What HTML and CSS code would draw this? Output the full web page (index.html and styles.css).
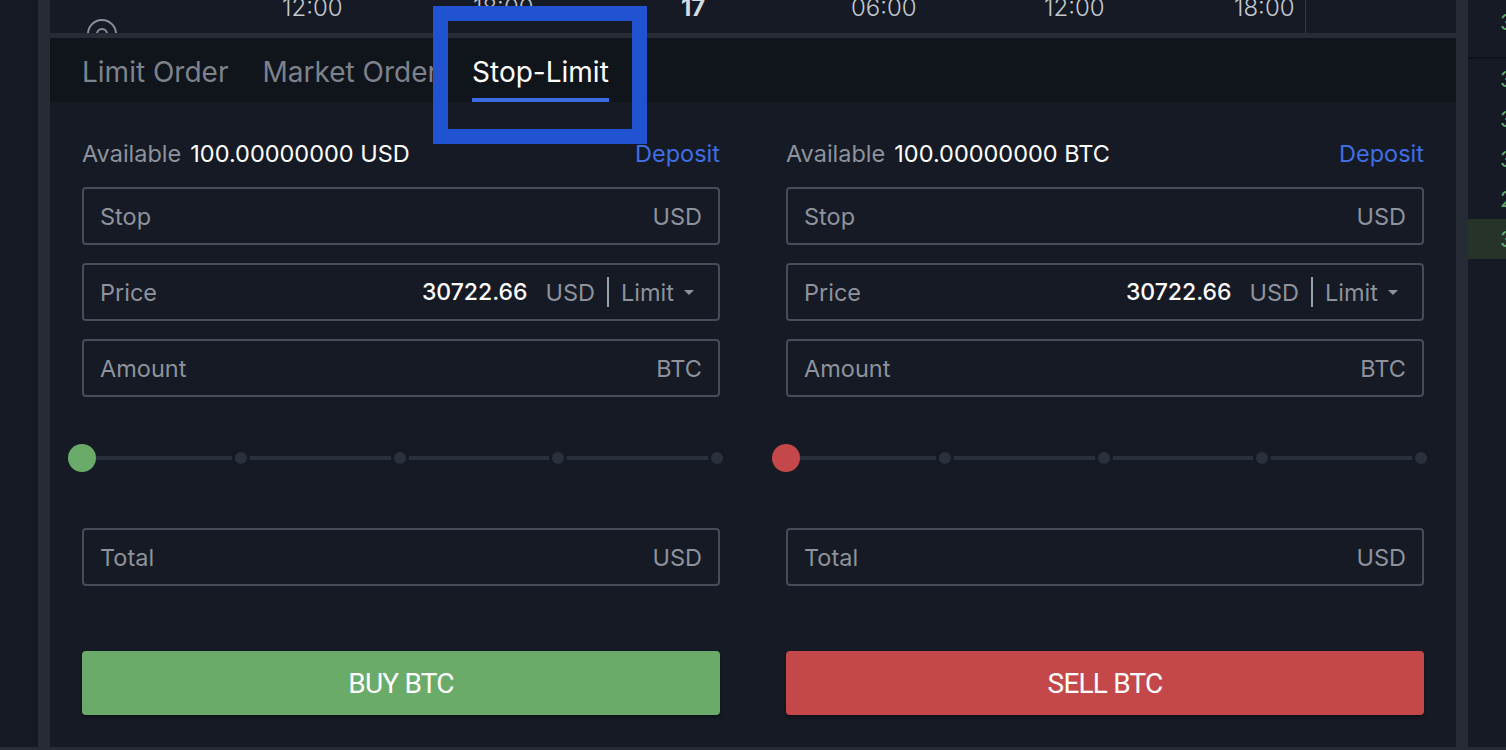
FILE: index.html
```html
<!DOCTYPE html>
<html lang="en">
<head>
    <meta name="viewport" content="width=device-width, initial-scale=1.0">
    <link rel="stylesheet" href="styles.css">
    <title>exchange - stop-limit</title>
</head>

<body>
    <div id="page">
        <div class="edge"></div>
        <div class="gutter"></div>

        <main id="panel">
            <!-- bottom of the price chart: time axis -->
            <div class="axis">
                <svg class="axis-icon" width="34" height="34" viewBox="0 0 34 34">
                    <circle cx="17" cy="17" r="14" fill="none" stroke="#8a909b" stroke-width="2"/>
                    <circle cx="17" cy="17" r="5" fill="none" stroke="#8a909b" stroke-width="2"/>
                </svg>
                <span class="tick" style="left: 232px">12:00</span>
                <span class="tick" style="left: 423px">18:00</span>
                <span class="tick day" style="left: 631px">17</span>
                <span class="tick" style="left: 801px">06:00</span>
                <span class="tick" style="left: 994px">12:00</span>
                <span class="tick" style="left: 1184px">18:00</span>
                <div class="axis-end"></div>
            </div>
            <div class="divider"></div>

            <nav class="tabs">
                <div class="tab">Limit Order</div>
                <div class="tab">Market Order</div>
                <div class="tab active">Stop-Limit</div>
            </nav>

            <section class="form">
                <div class="col">
                    <div class="available">
                        <span class="muted">Available</span>
                        <span class="balance">100.00000000 USD</span>
                        <a class="deposit">Deposit</a>
                    </div>
                    <div class="field"><span class="label">Stop</span><span class="unit">USD</span></div>
                    <div class="field price">
                        <span class="label">Price</span>
                        <span class="value">30722.66</span>
                        <span class="unit">USD</span>
                        <span class="sep"></span>
                        <span class="type">Limit</span>
                        <span class="caret"></span>
                    </div>
                    <div class="field"><span class="label">Amount</span><span class="unit">BTC</span></div>
                    <div class="slider">
                        <span class="stop knob buy"></span>
                        <span class="stop"></span>
                        <span class="stop"></span>
                        <span class="stop"></span>
                        <span class="stop"></span>
                    </div>
                    <div class="field"><span class="label">Total</span><span class="unit">USD</span></div>
                    <button class="action buy">BUY BTC</button>
                </div>

                <div class="col">
                    <div class="available">
                        <span class="muted">Available</span>
                        <span class="balance">100.00000000 BTC</span>
                        <a class="deposit">Deposit</a>
                    </div>
                    <div class="field"><span class="label">Stop</span><span class="unit">USD</span></div>
                    <div class="field price">
                        <span class="label">Price</span>
                        <span class="value">30722.66</span>
                        <span class="unit">USD</span>
                        <span class="sep"></span>
                        <span class="type">Limit</span>
                        <span class="caret"></span>
                    </div>
                    <div class="field"><span class="label">Amount</span><span class="unit">BTC</span></div>
                    <div class="slider">
                        <span class="stop knob sell"></span>
                        <span class="stop"></span>
                        <span class="stop"></span>
                        <span class="stop"></span>
                        <span class="stop"></span>
                    </div>
                    <div class="field"><span class="label">Total</span><span class="unit">USD</span></div>
                    <button class="action sell">SELL BTC</button>
                </div>
            </section>
        </main>

        <div class="gutter"></div>

        <!-- order book, mostly off screen -->
        <aside class="book">
            <div class="book-head">30722.66</div>
            <div class="row">30722.66</div>
            <div class="row">30722.50</div>
            <div class="row">30721.90</div>
            <div class="row">29998.00</div>
            <div class="row mine">30700.00</div>
        </aside>
    </div>
    <div class="bottom-bar"></div>

    <!-- annotation box round the active tab -->
    <div class="highlight"></div>
</body>
</html>
```

FILE: styles.css
```css
body {
    margin: 0px;
    width: 1506px;
    height: 750px;
    overflow: hidden;
    background-color: #141922;
    font-family: Inter, "Noto Sans", sans-serif;
    color: #8d929c;
}

#page {
    display: flex;
    flex-direction: row;
    height: 747px;
}

.edge {
    width: 38px;
    background-color: #141922;
}

.gutter {
    width: 12px;
    background-color: #262b36;
}

.bottom-bar {
    height: 3px;
    background-color: #262b36;
}

#panel {
    flex: 1;
    display: flex;
    flex-direction: column;
    background-color: #151a24;
    min-width: 0;
}

/* time axis */
.axis {
    position: relative;
    height: 33px;
    overflow: hidden;
}

.axis-icon {
    position: absolute;
    left: 35px;
    top: 17px;
}

.tick {
    position: absolute;
    top: -4px;
    font-size: 24px;
    line-height: 24px;
    font-weight: 300;
    color: #c3c8d0;
}

.tick.day {
    font-weight: 700;
    color: #d6dae1;
}

.axis-end {
    position: absolute;
    left: 1255px;
    top: 0px;
    width: 1px;
    height: 100%;
    background-color: #2f3541;
}

.divider {
    height: 5px;
    background-color: #262b36;
}

/* tabs */
.tabs {
    display: flex;
    gap: 34px;
    height: 64px;
    padding-left: 32px;
    background-color: #10151c;
}

.tab {
    padding-top: 16px;
    font-size: 28px;
    line-height: 36px;
    color: #7d828c;
    box-sizing: border-box;
    height: 64px;
}

.tab.active {
    color: #ffffff;
    border-bottom: 4px solid #3d6ae0;
}

/* order form */
.form {
    display: flex;
    gap: 66px;
    padding: 38px 32px 0px 32px;
}

.col {
    flex: 1;
    display: flex;
    flex-direction: column;
}

.available {
    display: flex;
    align-items: center;
    gap: 9px;
    height: 26px;
    font-size: 23.5px;
    margin-bottom: 21px;
}

.balance {
    color: #ffffff;
}

.deposit {
    margin-left: auto;
    color: #3d6fe3;
}

.field {
    display: flex;
    align-items: center;
    height: 58px;
    box-sizing: border-box;
    padding: 0px 16px;
    border: 2px solid #474d58;
    border-radius: 4px;
    font-size: 23.5px;
    margin-bottom: 18px;
}

.field .label {
    flex: 1;
}

.field .value {
    color: #ffffff;
    font-weight: 500;
    font-size: 23px;
    margin-right: 18px;
}

.field .sep {
    width: 2px;
    height: 30px;
    margin: 0px 12px;
    background-color: #9aa0aa;
}

.field.price {
    padding-right: 24px;
}

.caret {
    margin-left: 10px;
    width: 0px;
    height: 0px;
    border-left: 5px solid transparent;
    border-right: 5px solid transparent;
    border-top: 5px solid #8d929c;
}

/* percentage slider */
.slider {
    display: flex;
    justify-content: space-between;
    align-items: center;
    height: 28px;
    margin: 29px 3px 56px 0px;
    background: linear-gradient(#2a303c, #2a303c) center / 100% 4px no-repeat;
}

.stop {
    width: 0px;
    display: flex;
    justify-content: center;
}

.stop::before {
    content: "";
    flex: none;
    width: 12px;
    height: 12px;
    border-radius: 50%;
    background-color: #2a303c;
    box-shadow: 0 0 0 3px #151a24;
}

.knob::before {
    width: 28px;
    height: 28px;
    box-shadow: none;
}

.knob.buy::before {
    background-color: #6aab6a;
}

.knob.sell::before {
    background-color: #c4484a;
}

.action {
    margin-top: 47px;
    height: 64px;
    border: none;
    border-radius: 4px;
    color: #ffffff;
    font-family: Roboto, "Liberation Sans", sans-serif;
    font-size: 28px;
    letter-spacing: -0.8px;
    box-shadow: 0 2px 3px rgba(0, 0, 0, 0.35);
}

.action.buy {
    background-color: #6aab6a;
}

.action.sell {
    background-color: #c4484a;
}

/* order book strip */
.book {
    width: 38px;
    overflow: hidden;
    background-color: #151a24;
    font-size: 22px;
    color: #62a86c;
    white-space: nowrap;
}

.book-head {
    height: 57px;
    line-height: 44px;
    padding-left: 32px;
    border-bottom: 2px solid #0f1319;
}

.book .row {
    height: 40px;
    line-height: 40px;
    padding-left: 32px;
}

.book .row.mine {
    background-color: #253329;
}

/* annotation */
.highlight {
    position: absolute;
    left: 433px;
    top: 6px;
    width: 214px;
    height: 138px;
    box-sizing: border-box;
    border: 15px solid #2152cf;
}
```
